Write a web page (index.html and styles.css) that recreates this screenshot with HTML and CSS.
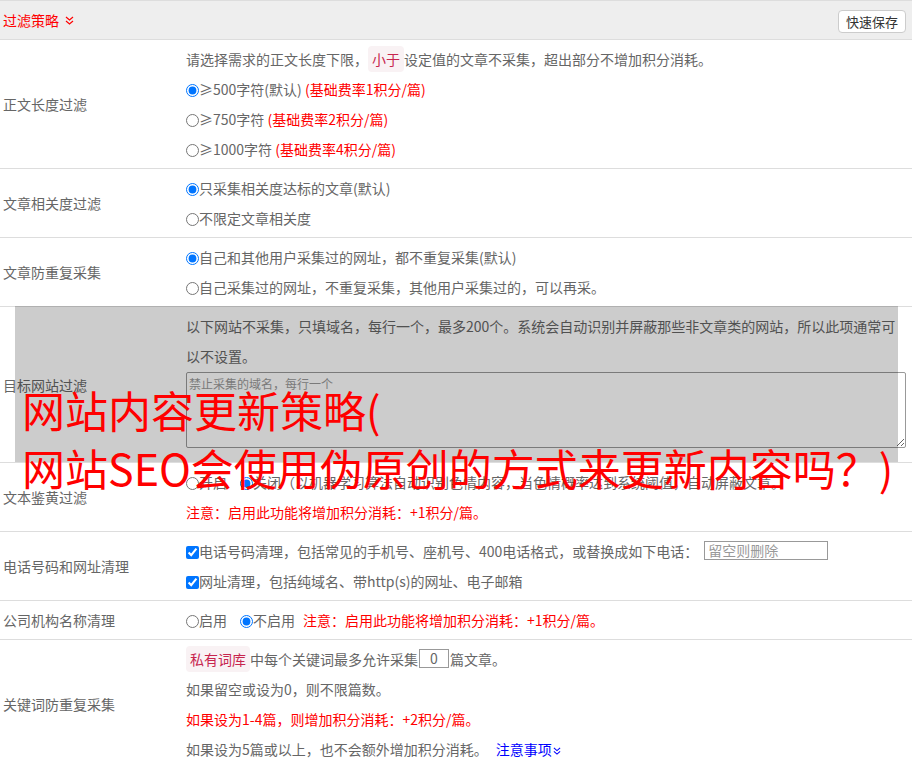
FILE: index.html
```html
<!DOCTYPE html>
<html lang="zh-CN">
<head>
    <meta charset="UTF-8">
    <meta name="viewport" content="width=device-width, initial-scale=1.0">
    <title>过滤策略</title>
    <link rel="stylesheet" href="styles.css">
</head>
<body>
    <div class="panel">
        <div class="panel-head">
            <span class="panel-title">过滤策略<svg class="chevron" width="9" height="9" viewBox="0 0 9 9"><polyline points="1,1 4.5,4 8,1"/><polyline points="1,5 4.5,8 8,5"/></svg></span>
            <button class="btn-save">快速保存</button>
        </div>

        <div class="row">
            <div class="row-label">正文长度过滤</div>
            <div class="row-body">
                <p class="line">请选择需求的正文长度下限，<code class="tag">小于</code>设定值的文章不采集，超出部分不增加积分消耗。</p>
                <p class="line"><label><input type="radio" name="len" checked>≥500字符(默认)</label> <span class="red">(基础费率1积分/篇)</span></p>
                <p class="line"><label><input type="radio" name="len">≥750字符</label> <span class="red">(基础费率2积分/篇)</span></p>
                <p class="line"><label><input type="radio" name="len">≥1000字符</label> <span class="red">(基础费率4积分/篇)</span></p>
            </div>
        </div>

        <div class="row">
            <div class="row-label">文章相关度过滤</div>
            <div class="row-body">
                <p class="line"><label><input type="radio" name="rel" checked>只采集相关度达标的文章(默认)</label></p>
                <p class="line"><label><input type="radio" name="rel">不限定文章相关度</label></p>
            </div>
        </div>

        <div class="row">
            <div class="row-label">文章防重复采集</div>
            <div class="row-body">
                <p class="line"><label><input type="radio" name="dup" checked>自己和其他用户采集过的网址，都不重复采集(默认)</label></p>
                <p class="line"><label><input type="radio" name="dup">自己采集过的网址，不重复采集，其他用户采集过的，可以再采。</label></p>
            </div>
        </div>

        <div class="row row-sites">
            <div class="row-label">目标网站过滤</div>
            <div class="row-body">
                <p class="line">以下网站不采集，只填域名，每行一个，最多200个。系统会自动识别并屏蔽那些非文章类的网站，所以此项通常可<br>以不设置。</p>
                <textarea class="site-list" placeholder="禁止采集的域名，每行一个"></textarea>
            </div>
            <div class="shade"></div>
        </div>

        <div class="row">
            <div class="row-label">文本鉴黄过滤</div>
            <div class="row-body">
                <p class="line"><label class="opt"><input type="radio" name="porn">开启</label><label><input type="radio" name="porn" checked>关闭（以机器学习算法自动识别色情内容，当色情概率达到系统阈值，自动屏蔽文章。</label></p>
                <p class="line red">注意：启用此功能将增加积分消耗：+1积分/篇。</p>
            </div>
        </div>

        <div class="row">
            <div class="row-label">电话号码和网址清理</div>
            <div class="row-body">
                <p class="line"><label><input type="checkbox" checked>电话号码清理，包括常见的手机号、座机号、400电话格式，或替换成如下电话：</label><input class="phone" type="text" placeholder="留空则删除"></p>
                <p class="line"><label><input type="checkbox" checked>网址清理，包括纯域名、带http(s)的网址、电子邮箱</label></p>
            </div>
        </div>

        <div class="row">
            <div class="row-label">公司机构名称清理</div>
            <div class="row-body">
                <p class="line"><label class="opt"><input type="radio" name="corp">启用</label><label><input type="radio" name="corp" checked>不启用</label><span class="red note">注意：启用此功能将增加积分消耗：+1积分/篇。</span></p>
            </div>
        </div>

        <div class="row row-last">
            <div class="row-label">关键词防重复采集</div>
            <div class="row-body">
                <p class="line"><code class="tag">私有词库</code>中每个关键词最多允许采集<input class="count" type="text" value="0">篇文章。</p>
                <p class="line">如果留空或设为0，则不限篇数。</p>
                <p class="line red">如果设为1-4篇，则增加积分消耗：+2积分/篇。</p>
                <p class="line">如果设为5篇或以上，也不会额外增加积分消耗。<a class="more" href="#">注意事项<svg class="chevron" width="8" height="8" viewBox="0 0 9 9"><polyline points="1,1 4.5,4 8,1"/><polyline points="1,5 4.5,8 8,5"/></svg></a></p>
            </div>
        </div>

        <div class="headline">网站内容更新策略(<br>网站SEO会使用伪原创的方式来更新内容吗？)</div>
    </div>
</body>
</html>
```

FILE: styles.css
```css
html {
    overflow: hidden;
}

body {
    margin: 0;
    font-family: "Noto Sans CJK SC", sans-serif;
    font-size: 14px;
    color: #666;
    background-color: #fff;
}

.panel {
    position: relative;
}

.panel-head {
    display: flex;
    align-items: center;
    justify-content: space-between;
    height: 38px;
    padding: 0 6px 0 3px;
    background-color: #eee;
    border-top: 1px solid #ddd;
    border-bottom: 1px solid #ddd;
}

.panel-title {
    color: #f00;
    display: flex;
    align-items: center;
}

.chevron {
    fill: none;
    stroke: currentColor;
    stroke-width: 1.2;
}

.panel-title .chevron {
    margin-left: 6px;
}

.btn-save {
    height: 23px;
    padding: 0 7px;
    margin-top: 2px;
    font-family: inherit;
    font-size: 13px;
    color: #333;
    background-color: #fff;
    border: 1px solid #ccc;
    border-radius: 4px;
}

.row {
    display: grid;
    grid-template-columns: 186px 1fr;
    border-bottom: 1px solid #ddd;
}

.row-last {
    border-bottom: none;
}

.row-label {
    align-self: center;
    padding-left: 3px;
}

.row-body {
    padding: 4px 0;
}

.line {
    margin: 0;
    line-height: 30px;
    white-space: nowrap;
}

.red {
    color: #f00;
}

.tag {
    font-family: inherit;
    font-size: 14px;
    color: #c7254e;
    background-color: #f9f2f4;
    border-radius: 4px;
    padding: 3px 4px;
}

input[type="radio"],
input[type="checkbox"] {
    width: 13px;
    height: 13px;
    margin: 0;
    vertical-align: -2px;
}

.opt {
    margin-right: 13px;
}

.note {
    margin-left: 8px;
}

.site-list {
    display: block;
    box-sizing: border-box;
    width: 720px;
    height: 76px;
    margin: 1px 0 10px;
    padding: 2px;
    font-family: inherit;
    font-size: 12px;
    border: 1px solid #999;
    border-radius: 2px;
}

.site-list::placeholder,
.phone::placeholder {
    color: #999;
}

.phone {
    box-sizing: border-box;
    width: 124px;
    height: 19px;
    margin-left: 6px;
    padding: 0 3px;
    font-family: inherit;
    font-size: 14px;
    border: 1px solid #999;
    vertical-align: 1px;
}

.count {
    box-sizing: border-box;
    width: 30px;
    height: 19px;
    margin: 0 1px;
    padding: 0;
    font-family: inherit;
    font-size: 14px;
    color: #666;
    text-align: center;
    border: 1px solid #999;
    vertical-align: 1px;
}

.more {
    color: #00f;
    text-decoration: none;
    margin-left: 8px;
}

.more .chevron {
    margin-left: 1px;
}

/* grey cover over the site filter row */
.row-sites {
    position: relative;
}

.shade {
    position: absolute;
    left: 15px;
    right: 14px;
    top: -1px;
    bottom: 0;
    background-color: rgba(0, 0, 0, 0.2);
}

.headline {
    position: absolute;
    top: 380px;
    left: 22px;
    font-size: 43px;
    line-height: 58px;
    color: #f00;
    white-space: nowrap;
}
```
